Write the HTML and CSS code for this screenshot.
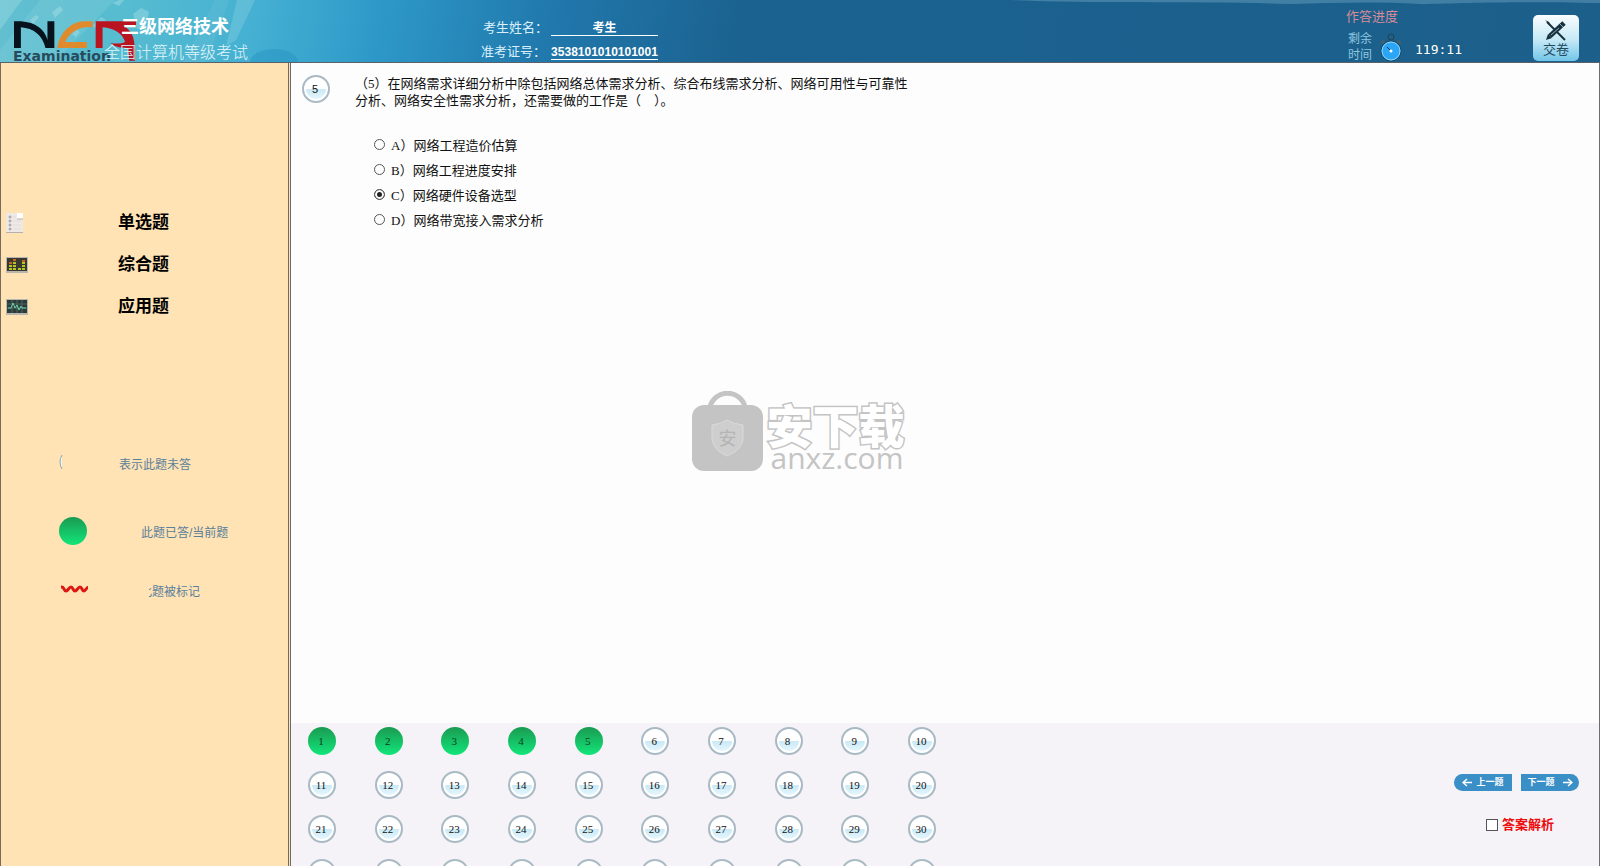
FILE: index.html
```html
<!DOCTYPE html>
<html lang="zh-CN">
<head>
<meta charset="utf-8">
<title>全国计算机等级考试</title>
<link rel="stylesheet" href="styles.css">
</head>
<body>
<header class="header">
  <svg class="header-art" viewBox="0 0 1600 62" preserveAspectRatio="none" aria-hidden="true">
    <g fill="#c9f0f0">
      <path opacity=".25" d="M0 0h22L0 30z"/>
      <path opacity=".12" d="M40 0h75L55 62H0V50z"/>
      <path opacity=".3" d="M52 12l8-6 3 4-8 8zM30 20l6-5 3 2-6 7zM92 26l9-9 5 3-7 9zM72 34l5-5 3 3-4 5zM133 14l8-6 8 4-3 14-9 3zM112 3l7-3 5 0-5 6z"/>
      <path opacity=".2" d="M237 0h18L236 40l-10 6z"/>
      <path opacity=".08" d="M215 0h14L206 62h-22z"/>
    </g>
    <ellipse cx="274" cy="62" rx="24" ry="13" fill="#1786b8" opacity=".3"/>
    <path opacity=".35" fill="#8ab9d2" d="M1010 0h590v3c-90-2-130 0-180 1-50-3-90-1-130 0-90-3-200 0-280-4z"/>
  </svg>
  <div class="brand">
    <svg class="logo" viewBox="0 0 126 41" aria-hidden="true">
      <path fill="#06121c" d="M0 0h7c15 1 24 8 27 19V0h7v27h-9C29 14 20 7 7 6v21H0z"/>
      <path fill="#e08a2e" d="M80 0v6h-7C64 7 56 12 52 21h22v6H44C47 11 57 1 71 0z"/>
      <path fill="#b9141f" fill-rule="evenodd" d="M83 0h41v4l-13 0c5 3 8 7 10 12 2 7 2 15 2 24h-6c0-5-1-9-2-13-6 0-13-1-17-5 5 1 11 1 15-1C110 12 102 7 90 6v21h-7z"/>
    </svg>
    <span class="logo-word">Examination</span>
    <div class="titles">
      <h1 class="subject">三级网络技术</h1>
      <p class="exam">全国计算机等级考试</p>
    </div>
  </div>
  <dl class="student">
    <dt>考生姓名：</dt><dd>考生</dd>
    <dt class="ticket">准考证号：</dt><dd>3538101010101001</dd>
  </dl>
  <div class="progress">
    <span class="progress-title">作答进度</span>
    <div class="timer">
      <span class="timer-label">剩余<br>时间</span>
      <svg class="clock" viewBox="0 0 22 29" aria-hidden="true">
        <circle cx="11" cy="4" r="3" fill="none" stroke="#24424f"/>
        <circle cx="3" cy="9" r="2" fill="#45606c"/><circle cx="19" cy="9" r="2" fill="#45606c"/>
        <circle cx="11" cy="18" r="10" fill="#2ba5f5" stroke="#17465f"/>
        <circle cx="11" cy="18" r="9" fill="none" stroke="#8ed6fb"/>
        <path d="M7 14l4 4" stroke="#123b56"/><circle cx="11" cy="18" r="1.5" fill="#fff"/>
      </svg>
      <time class="time">119:11</time>
    </div>
  </div>
  <button class="submit" type="button">
    <svg viewBox="0 0 22 21" aria-hidden="true">
      <path d="M2 2l18 18" stroke="#17303d" stroke-width="2"/>
      <path d="M0 0l4 2 2 4z" fill="#17303d"/>
      <path d="M19 3L5 16" stroke="#17303d" stroke-width="5"/>
      <path d="M3 14l4 4-6 2z" fill="#17303d"/>
      <path d="M14 8L6 15" stroke="#8fa9b5"/><path d="M15 4l3 3" stroke="#8fa9b5"/>
    </svg>
    <span>交卷</span>
  </button>
</header>
<div class="workspace">
  <aside class="sidebar">
    <nav class="sections">
      <a class="section" href="#single">
        <svg viewBox="0 0 22 20" aria-hidden="true">
          <path d="M0 0h17v20H0z" fill="#eee9e5"/><path d="M11 0h6v6h-6z" fill="#fff"/>
          <path d="M11 6h6M0 19.500h17" stroke="#b5b0ac"/>
          <path d="M7 4h3M7 8h8M7 12h8M7 16h8" stroke="#dfdddd"/>
          <g fill="none" stroke="#9b9a9a"><circle cx="4" cy="4" r="1"/><circle cx="4" cy="8" r="1"/><circle cx="4" cy="12" r="1"/><circle cx="4" cy="16" r="1"/></g>
        </svg>
        <span>单选题</span>
      </a>
      <a class="section" href="#combined">
        <svg viewBox="0 0 22 20" aria-hidden="true">
          <path d="M0 2h22v16H0z" fill="#b9b6b0"/><path d="M1 3h20v13H1z" fill="#39392f"/>
          <g stroke-width="3" stroke-dasharray="2 1"><path d="M4.500 15V9M8.500 15V7M13.500 15v-3M17.500 15V7" stroke="#b8c51d"/><path d="M8.500 6V4M17.500 7V5M4.500 9V7" stroke="#ca6425"/></g>
        </svg>
        <span>综合题</span>
      </a>
      <a class="section" href="#applied">
        <svg viewBox="0 0 22 20" aria-hidden="true">
          <path d="M0 2h22v16H0z" fill="#b9b6b0"/><path d="M1 3h20v13H1z" fill="#2b3c3a"/>
          <path d="M1 7h20M1 11h20M6 3v13M11 3v13M16 3v13" stroke="#50645e"/>
          <path d="M2 11h3l2-5 2 5 2-3 2 5 2-4 1 2h4" fill="none" stroke="#6bd3ad"/>
        </svg>
        <span>应用题</span>
      </a>
    </nav>
    <ul class="legend">
      <li class="legend-row">
        <svg class="legend-mark" viewBox="0 0 30 30" aria-hidden="true"><path d="M4 7Q0 14 4 21z" fill="#f4f4ee"/><path d="M4 7Q0 14 4 21" fill="none" stroke="#8ba4b1"/></svg>
        <span class="legend-text near">表示此题未答</span>
      </li>
      <li class="legend-row done-row">
        <span class="legend-mark dot"></span>
        <span class="legend-text middle">此题已答/当前题</span>
      </li>
      <li class="legend-row">
        <svg class="legend-mark" viewBox="0 0 30 30" aria-hidden="true"><path d="M3 12h1c2 0 2 4 4 4s3-4 5-4 2 4 4 4 3-4 5-4 2 4 4 4 2-4 5-4" fill="none" stroke="#dc1712" stroke-width="3"/></svg>
        <span class="legend-text cut">此题被标记</span>
      </li>
    </ul>
  </aside>
  <main class="main">
    <section class="question">
      <span class="ball current">5</span>
      <fieldset class="body">
        <legend class="stem">（5）在网络需求详细分析中除包括网络总体需求分析、综合布线需求分析、网络可用性与可靠性分析、网络安全性需求分析，还需要做的工作是（　）。</legend>
        <div class="options">
          <label class="option"><input type="radio" name="answer">A）网络工程造价估算</label>
          <label class="option"><input type="radio" name="answer">B）网络工程进度安排</label>
          <label class="option"><input type="radio" name="answer" checked>C）网络硬件设备选型</label>
          <label class="option"><input type="radio" name="answer">D）网络带宽接入需求分析</label>
        </div>
      </fieldset>
    </section>
    <footer class="panel">
      <div class="numbers">
        <button class="ball done">1</button><button class="ball done">2</button><button class="ball done">3</button><button class="ball done">4</button><button class="ball done">5</button><button class="ball">6</button><button class="ball">7</button><button class="ball">8</button><button class="ball">9</button><button class="ball">10</button>
        <button class="ball">11</button><button class="ball">12</button><button class="ball">13</button><button class="ball">14</button><button class="ball">15</button><button class="ball">16</button><button class="ball">17</button><button class="ball">18</button><button class="ball">19</button><button class="ball">20</button>
        <button class="ball">21</button><button class="ball">22</button><button class="ball">23</button><button class="ball">24</button><button class="ball">25</button><button class="ball">26</button><button class="ball">27</button><button class="ball">28</button><button class="ball">29</button><button class="ball">30</button>
        <button class="ball" aria-label="31"></button><button class="ball" aria-label="32"></button><button class="ball" aria-label="33"></button><button class="ball" aria-label="34"></button><button class="ball" aria-label="35"></button><button class="ball" aria-label="36"></button><button class="ball" aria-label="37"></button><button class="ball" aria-label="38"></button><button class="ball" aria-label="39"></button><button class="ball" aria-label="40"></button>
      </div>
      <div class="controls">
        <div class="pager">
          <button class="step prev" type="button"><svg viewBox="0 0 10 9" aria-hidden="true"><path d="M10 4.500H1M5 1L1 4.500 5 8"/></svg>上一题</button>
          <button class="step next" type="button">下一题<svg viewBox="0 0 10 9" aria-hidden="true"><path d="M0 4.500h9M5 1l4 3.500L5 8"/></svg></button>
        </div>
        <label class="explain"><input type="checkbox">答案解析</label>
      </div>
    </footer>
  </main>
</div>
<div class="watermark">
  <svg class="bag" viewBox="0 0 71 80" aria-hidden="true">
    <path d="M18 16a18 18 0 0 1 35 0" fill="none" stroke="#c4c4c4" stroke-width="5"/>
    <rect y="14" width="71" height="66" rx="12" fill="#c4c4c4"/>
    <path d="M20 34q9-1 15-5 7 4 16 5v14q-1 11-16 17-14-6-15-17z" fill="#cecece" stroke="#dadada"/>
    <text x="35.500" y="54" text-anchor="middle" class="bag-text">安</text>
  </svg>
  <div class="mark-words">
    <span class="mark-cn">安下载</span>
    <span class="mark-url">anxz.com</span>
  </div>
</div>
</body>
</html>
```
FILE: styles.css
```css
* { box-sizing: border-box; }
body {
  margin: 0;
  height: 100vh;
  overflow: hidden;
  display: flex;
  flex-direction: column;
  position: relative;
  background: #fdfdfd;
  font-family: "Liberation Sans", "Noto Sans CJK SC", sans-serif;
  font-size: 13px;
  color: #111;
}
h1, p, dl, dd, ul { margin: 0; padding: 0; }
button { border: 0; padding: 0; font-family: inherit; cursor: pointer; }

/* header */
.header {
  position: relative;
  flex: none;
  display: flex;
  height: 63px;
  overflow: hidden;
  padding-right: 21px;
  border-bottom: 1px solid #5a6168;
  background: linear-gradient(100deg, #62bfd0 0, #56bcd0 8%, #45b0d2 16%, #2d98c8 24%, #2179ad 34%, #1b6290 46%, #1c5f8b 100%);
}
.header-art { position: absolute; inset: 0; width: 100%; height: 100%; }
.brand { position: relative; width: 481px; }
.logo { position: absolute; left: 14px; top: 21px; width: 124px; height: 41px; }
.logo-word {
  position: absolute;
  left: 13px;
  top: 50px;
  font: bold 14px/13px "DejaVu Sans", sans-serif;
  color: #274b5c;
}
.titles { position: relative; padding: 15px 0 0 104px; color: #fff; }
.subject { padding-left: 17px; font-size: 18px; line-height: 25px; }
.exam { font-size: 16px; line-height: 26px; font-weight: 300; color: #e2f6fb; }
.student {
  position: relative;
  display: grid;
  grid-template-columns: 70px 107px;
  grid-auto-rows: 24px;
  align-items: center;
  padding-top: 16px;
  color: #d9f0fa;
}
.student dt { padding-left: 2px; line-height: 20px; white-space: nowrap; }
.student .ticket { padding-left: 0; }
.student dd { font-size: 12px; line-height: 14px; font-weight: bold; text-align: center; color: #fff; border-bottom: 1px solid #fff; }
.progress { position: relative; margin-left: auto; width: 187px; padding-top: 8px; }
.progress-title { display: block; line-height: 18px; color: #d98c98; }
.timer { display: flex; align-items: center; padding: 5px 0 0 2px; }
.timer-label { font-size: 12px; line-height: 16px; color: #8cc6df; }
.clock { width: 22px; height: 29px; margin-left: 8px; }
.time { margin-left: 13px; padding-top: 6px; font: 13px/16px "DejaVu Sans Mono", monospace; color: #fff; }
.submit {
  position: relative;
  width: 46px;
  height: 46px;
  margin-top: 15px;
  display: flex;
  flex-direction: column;
  align-items: center;
  border-radius: 5px;
  background: linear-gradient(#fafdfe, #c4e8f5 55%, #71c5e8);
  font-size: 13px;
  line-height: 17px;
  color: #23495d;
}
.submit svg { width: 22px; height: 21px; margin-top: 5px; }

/* sidebar */
.workspace { flex: 1; min-height: 0; display: flex; border-right: 1px solid #6d6e72; }
.sidebar {
  flex: none;
  width: 291px;
  border-left: 1px solid #766b60;
  border-right: 3px double #6e6a66;
  background: #ffe3b5;
}
.sections { padding: 139px 0 0 5px; }
.section {
  display: flex;
  align-items: center;
  gap: 90px;
  height: 42px;
  color: #000;
  font-size: 17px;
  line-height: 24px;
  font-weight: bold;
  text-decoration: none;
}
.section svg { width: 22px; height: 20px; }
.legend { padding: 120px 0 0 57px; list-style: none; }
.legend-row { display: flex; align-items: center; height: 30px; color: #5a7f9b; font-size: 12px; }
.done-row { height: 97px; padding-top: 9px; }
.legend-mark { flex: none; width: 30px; height: 30px; }
.dot { width: 28px; height: 28px; margin: 0 1px; border-radius: 50%; background: linear-gradient(#1a9a51, #12e67a); }
.near { margin-left: 31px; }
.middle { margin-left: 53px; }
.cut { display: flex; justify-content: flex-end; width: 51px; margin-left: 61px; overflow: hidden; white-space: nowrap; }

/* question */
.main { flex: 1; min-width: 0; display: flex; flex-direction: column; }
.question { flex: 1; min-height: 0; display: flex; padding: 12px 11px; }
.body {
  margin: 0 0 0 25px;
  padding: 0;
  border: 0;
  font-family: "Liberation Serif", "Noto Sans CJK SC", serif;
}
.stem { max-width: 560px; padding: 0; line-height: 17px; }
.options { padding: 23px 0 0 19px; }
.option { display: flex; align-items: center; height: 25px; }
.option input { width: 11px; height: 11px; margin: 0 6px 0 0; appearance: none; border: 1px solid #555; border-radius: 50%; background: #fff; }
.option input:checked { box-shadow: inset 0 0 0 2px #fff; background: #222; }

/* numbered balls */
.ball {
  flex: none;
  width: 28px;
  height: 28px;
  border: 2px solid #a9bac4;
  border-radius: 50%;
  padding: 0 2px 0 0;
  box-shadow: inset 0 0 0 2px #fff;
  background: linear-gradient(#fff 50%, #c9e9f6 50%, #eaf9ff);
  font: 11px/24px "Liberation Serif", serif;
  text-align: center;
  color: #111;
}
.ball.done { border-color: transparent; box-shadow: none; background: linear-gradient(#1a9a51, #12e67a) border-box; color: #063a1c; }
.ball.current { font-family: "Liberation Sans", sans-serif; }

/* bottom panel */
.panel { flex: none; display: flex; justify-content: space-between; height: 143px; overflow: hidden; background: #f5f3f7; }
.numbers {
  display: grid;
  grid-template-columns: repeat(10, 28px);
  justify-content: space-between;
  align-content: start;
  row-gap: 16px;
  width: 645px;
  padding: 4px 0 0 17px;
}
.controls { padding: 51px 20px 0 0; }
.pager { display: flex; gap: 9px; }
.step {
  display: flex;
  align-items: center;
  justify-content: center;
  gap: 4px;
  width: 58px;
  height: 17px;
  background: #3a8fc7;
  color: #fff;
  font-size: 9px;
  line-height: 17px;
  font-weight: bold;
}
.step svg { width: 10px; height: 9px; fill: none; stroke: #fff; stroke-width: 1.5; }
.prev { border-radius: 9px 0 0 9px; }
.next { gap: 8px; border-radius: 0 9px 9px 0; }
.explain { display: flex; align-items: center; margin: 24px 0 0 32px; line-height: 20px; font-weight: bold; color: #ee0c0c; }
.explain input { width: 12px; height: 12px; margin: 0 4px 0 0; appearance: none; border: 1px solid #555; background: #fff; }

/* watermark */
.watermark {
  position: absolute;
  inset: 0 4px 4px 0;
  display: flex;
  align-items: center;
  justify-content: center;
  gap: 4px;
  pointer-events: none;
  color: #c4c4c4;
}
.bag { width: 71px; height: 80px; }
.bag-text { font-size: 18px; fill: #b4b4b4; }
.mark-words { display: flex; flex-direction: column; padding-top: 8px; }
.mark-cn {
  font: 900 46px/46px "Noto Sans CJK SC", sans-serif;
  color: #fff;
  -webkit-text-stroke: 3px #c4c4c4;
  paint-order: stroke fill;
}
.mark-url { padding-left: 4px; font: 30px/24px "Open Sans", sans-serif; }
```
